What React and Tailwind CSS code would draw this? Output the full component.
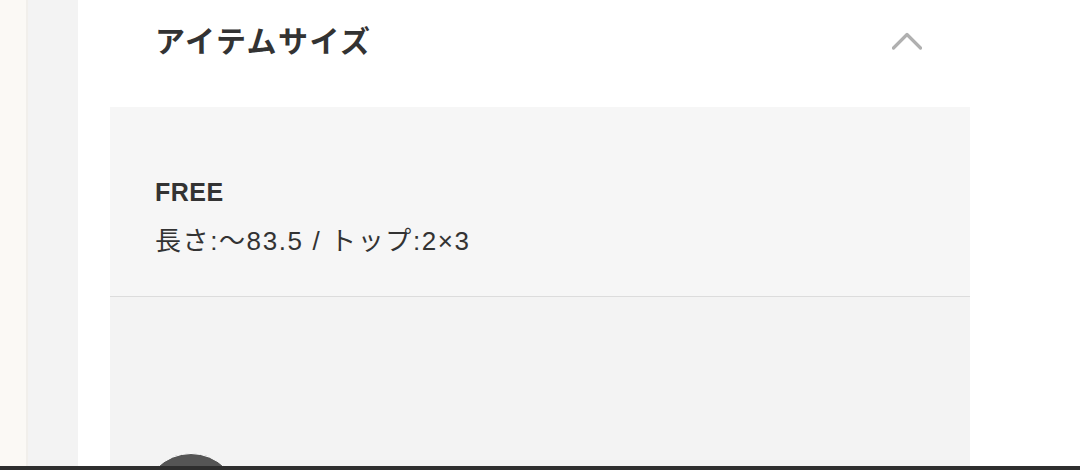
const jp = { fontFamily: '"Liberation Sans", "Noto Sans CJK JP", sans-serif' };

const Chevron = () => (
  <svg width="30" height="18" viewBox="0 0 30 18" fill="none">
    <polyline
      points="1.5,16 15,2.5 28.5,16"
      stroke="#b0b0b0"
      strokeWidth="3.2"
      strokeLinecap="round"
      strokeLinejoin="round"
    />
  </svg>
);

const App = () => {
  return (
    <div className="w-[1080px] h-[470px] flex flex-col overflow-hidden bg-white" style={jp}>
      <div className="flex h-[466px] shrink-0">
        <div className="w-[26px] bg-[#fbf9f5]" />
        <div className="w-[2px] bg-[#f1efeb]" />
        <div className="w-[50px] bg-[#f3f3f3]" />
        <div className="flex-1 flex flex-col bg-white">
          <div className="h-[107px] shrink-0 ml-[32px] w-[860px] pl-[45px] pr-[48px] pt-[27px] flex justify-between items-start">
            <h2 className="text-[30px] leading-[30px] font-bold text-[#333333] tracking-[1.5px]">
              アイテムサイズ
            </h2>
            <div className="mt-[5px]">
              <Chevron />
            </div>
          </div>
          <div className="ml-[32px] w-[860px] flex-1 flex flex-col overflow-hidden">
            <div className="h-[190px] shrink-0 bg-[#f6f6f6] border-b border-[#dcdcdc] pl-[45px] pt-[69px]">
              <p className="text-[25px] leading-[32px] font-bold text-[#333333] tracking-[0.5px]">FREE</p>
              <p className="mt-[17px] text-[26px] leading-[32px] text-[#333333] tracking-[1.6px]">
                長さ:〜83.5 / トップ:2×3
              </p>
            </div>
            <div className="flex-1 bg-[#f3f3f3] pl-[32px] pt-[156px]">
              <div className="w-[98px] h-[98px] rounded-full bg-[#555555] border border-white" />
            </div>
          </div>
        </div>
      </div>
      <div className="h-[4px] bg-[#2e2e2e]" />
    </div>
  );
};

export default App;
